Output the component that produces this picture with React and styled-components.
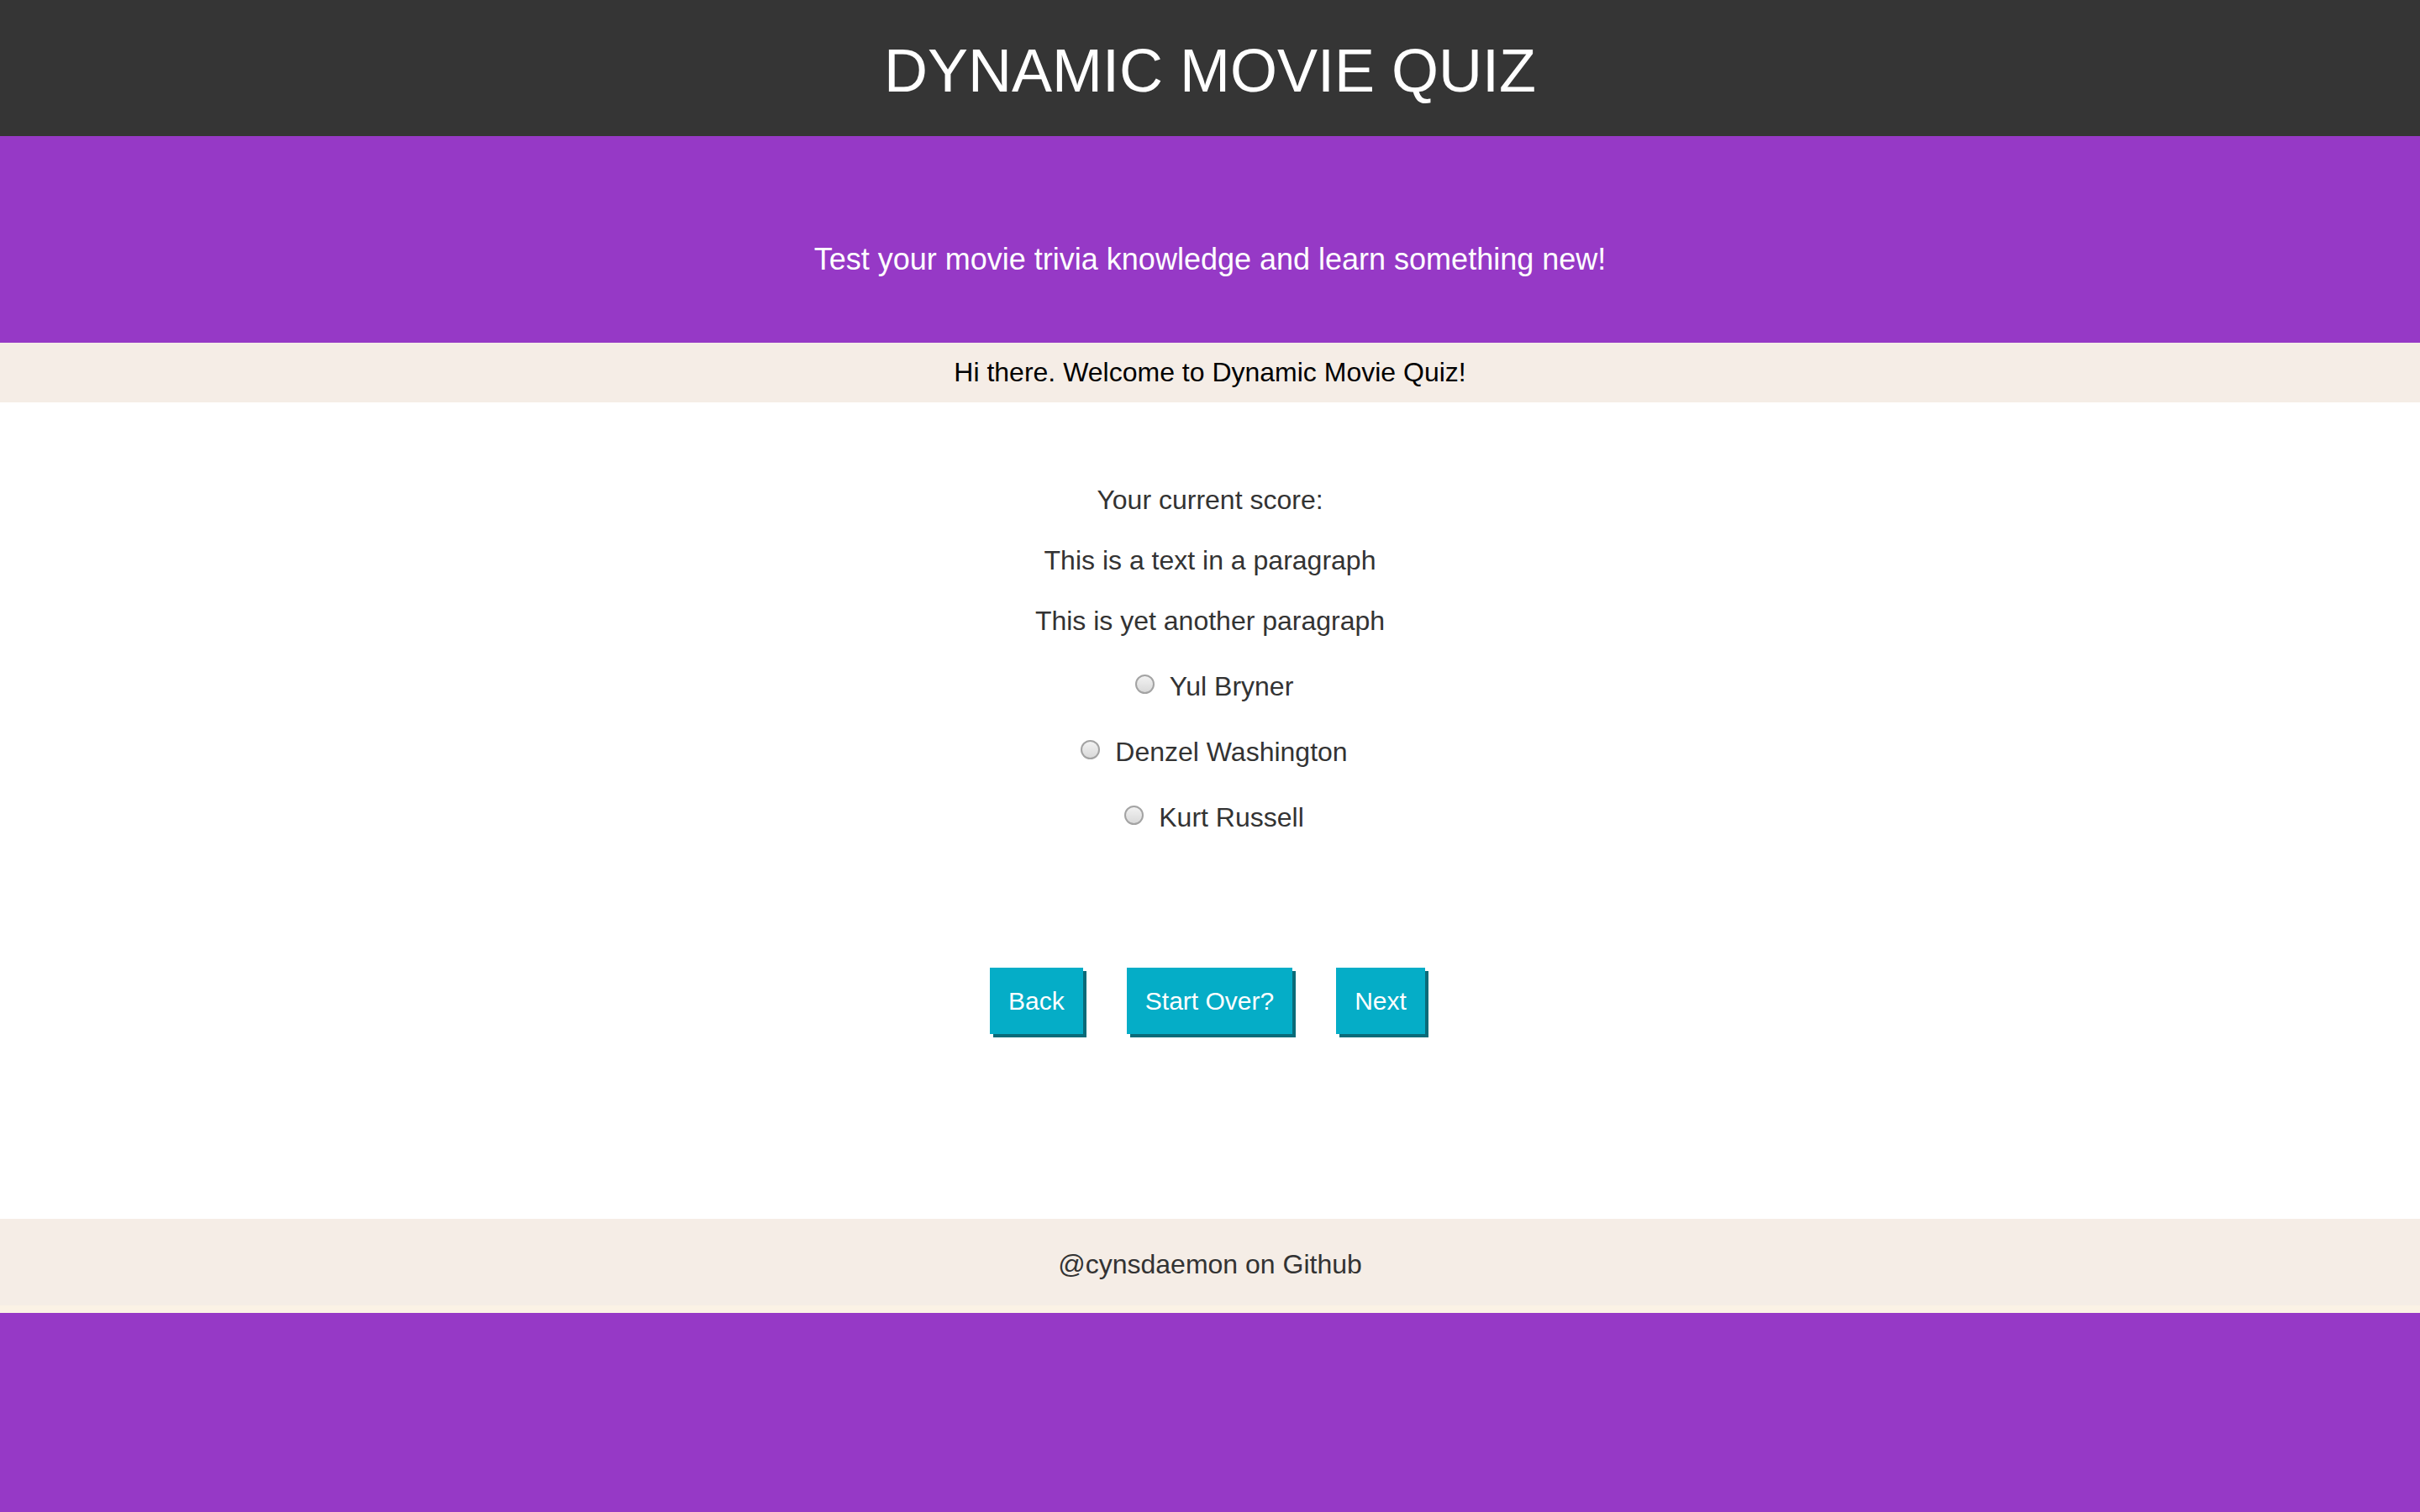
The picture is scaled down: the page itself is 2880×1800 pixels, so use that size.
import React, { useState } from "react";
import styled, { createGlobalStyle } from "styled-components";

const GlobalStyle = createGlobalStyle`
  html, body {
    margin: 0;
    padding: 0;
    background: #9639c6;
    font-family: "Liberation Sans", Arial, sans-serif;
  }
  * { box-sizing: border-box; }
`;

const Header = styled.header`
  height: 162px;
  padding-top: 7px;
  background: #353535;
  display: flex;
  align-items: center;
  justify-content: center;
`;

const Title = styled.h1`
  margin: 0;
  font-size: 72px;
  font-weight: 400;
  color: #ffffff;
  line-height: 1.15;
`;

const Hero = styled.section`
  background: #9639c6;
  padding: 126px 0 78px;
  text-align: center;
`;

const Tagline = styled.p`
  margin: 0;
  font-size: 36px;
  line-height: 42px;
  color: #ffffff;
`;

const Banner = styled.div`
  height: 71px;
  background: #f5ede6;
  display: flex;
  align-items: center;
  justify-content: center;
  font-size: 32px;
  color: #000000;
`;

const Main = styled.main`
  background: #ffffff;
  padding: 96px 0 220px;
  display: flex;
  flex-direction: column;
  align-items: center;
  color: #333333;
`;

const Paragraphs = styled.div`
  display: flex;
  flex-direction: column;
  align-items: center;
  gap: 32px;
`;

const Line = styled.p`
  margin: 0;
  font-size: 32px;
  line-height: 40px;
`;

const Options = styled.div`
  margin-top: 38px;
  display: flex;
  flex-direction: column;
  align-items: center;
  gap: 38px;
`;

const Option = styled.label`
  display: flex;
  align-items: center;
  height: 40px;
  font-size: 32px;
  cursor: pointer;
`;

const Radio = styled.input.attrs({ type: "radio" })`
  appearance: none;
  margin: 0 18px 6px 10px;
  width: 23px;
  height: 23px;
  border-radius: 50%;
  border: 2px solid #a3a3a3;
  background: linear-gradient(180deg, #f2f2f2 0%, #d9d9d9 100%);
  cursor: pointer;

  &:checked {
    background: radial-gradient(circle, #333 0 4px, #e8e8e8 5px);
  }
`;

const Buttons = styled.div`
  margin-top: 159px;
  margin-right: 6px;
  display: flex;
  gap: 52px;
`;

const Button = styled.button`
  padding: 22px;
  border: none;
  border-radius: 0;
  background: #05adc7;
  box-shadow: 4px 4px 0 #0a6b79;
  color: #ffffff;
  font-family: inherit;
  font-size: 30px;
  line-height: 35px;
  cursor: pointer;
`;

const Footer = styled.footer`
  height: 112px;
  background: #f5ede6;
  border-bottom: 9px solid #fbf2e5;
  padding-top: 6px;
  display: flex;
  align-items: center;
  justify-content: center;
  font-size: 32px;
  color: #333333;
`;

const answers = ["Yul Bryner", "Denzel Washington", "Kurt Russell"];

export default function App() {
  const [choice, setChoice] = useState(null);
  return (
    <>
      <GlobalStyle />
      <Header>
        <Title>DYNAMIC MOVIE QUIZ</Title>
      </Header>
      <Hero>
        <Tagline>Test your movie trivia knowledge and learn something new!</Tagline>
      </Hero>
      <Banner>Hi there. Welcome to Dynamic Movie Quiz!</Banner>
      <Main>
        <Paragraphs>
          <Line>Your current score:</Line>
          <Line>This is a text in a paragraph</Line>
          <Line>This is yet another paragraph</Line>
        </Paragraphs>
        <Options>
          {answers.map((a) => (
            <Option key={a}>
              <Radio
                name="answer"
                checked={choice === a}
                onChange={() => setChoice(a)}
              />
              {a}
            </Option>
          ))}
        </Options>
        <Buttons>
          <Button>Back</Button>
          <Button>Start Over?</Button>
          <Button>Next</Button>
        </Buttons>
      </Main>
      <Footer>@cynsdaemon on Github</Footer>
    </>
  );
}
